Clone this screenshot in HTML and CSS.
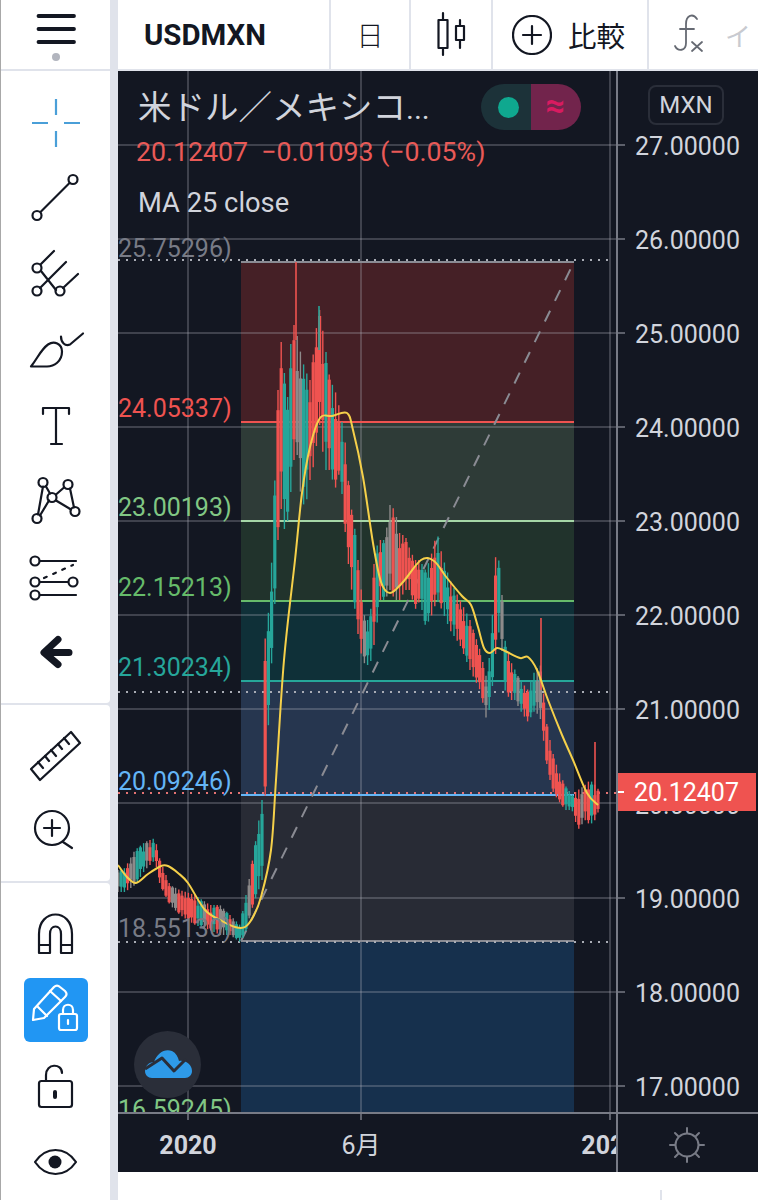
FILE: index.html
```html
<!DOCTYPE html>
<html lang="ja">
<head>
  <meta charset="UTF-8">
  <meta name="viewport" content="width=device-width, initial-scale=1">
  <title>USDMXN</title>
  <link rel="stylesheet" href="styles.css">
</head>
<body>
  <div class="app">
    <aside class="sidebar">
      <div class="menu">
        <svg class="icon" width="64" height="64" viewBox="23 3 64 64">
          <path class="thick" d="M37.500 16H73M37.500 29H73M37.500 42H73"/>
          <circle class="menu-dot" cx="55" cy="57" r="4"/>
        </svg>
      </div>

      <div class="group group-draw">
        <div class="tool">
          <svg class="icon crosshair" width="64" height="64" viewBox="24 91 64 64">
            <path d="M32 123H48M64 123H80M56 99V115M56 131V147"/>
          </svg>
        </div>
        <div class="tool">
          <svg class="icon" width="64" height="64" viewBox="24 166.500 64 64">
            <path d="M40.500 212.500L69.500 183.500"/>
            <circle cx="37" cy="216" r="4.500"/>
            <circle cx="73" cy="180" r="4.500"/>
          </svg>
        </div>
        <div class="tool">
          <svg class="icon" width="64" height="64" viewBox="24 242 64 64">
            <path d="M41 264L54 251M41 271L56 290M40 288L66 262M63 288L78 274"/>
            <circle cx="37" cy="268" r="4.500"/>
            <circle cx="37" cy="291" r="4.500"/>
            <circle cx="60" cy="291" r="4.500"/>
          </svg>
        </div>
        <div class="tool">
          <svg class="icon" width="64" height="64" viewBox="24 317.500 64 64">
            <path d="M31 367C38 358 41 350 48 345C54 341 62 344 62 352C62 362 54 367 47 367Z"/>
            <path d="M61 337C61 343 65 347 70 345L83 334"/>
          </svg>
        </div>
        <div class="tool">
          <svg class="icon" width="64" height="64" viewBox="24 393 64 64">
            <path d="M43 414V408H69V414M56 408V444M51 444H62"/>
          </svg>
        </div>
        <div class="tool">
          <svg class="icon" width="64" height="64" viewBox="24 468.500 64 64">
            <path d="M38 515L43 487M40 516L49 501M46 487L50 494M56 495L64 488M70 489L74 508M56 501L71 510"/>
            <circle cx="43" cy="483" r="4.500"/>
            <circle cx="68" cy="485" r="4.500"/>
            <circle cx="52" cy="498" r="4.500"/>
            <circle cx="37" cy="519" r="4.500"/>
            <circle cx="75" cy="512" r="4.500"/>
          </svg>
        </div>
        <div class="tool">
          <svg class="icon" width="64" height="64" viewBox="24 544 64 64">
            <path d="M40 561H76M40 582H68M40 595H76"/>
            <path class="dashed" d="M44 578L73 565"/>
            <circle cx="35" cy="561" r="4.500"/>
            <circle cx="35" cy="582" r="4.500"/>
            <circle cx="73" cy="582" r="4.500"/>
            <circle cx="35" cy="595" r="4.500"/>
          </svg>
        </div>
        <div class="tool">
          <svg class="icon" width="64" height="64" viewBox="24 619.500 64 64">
            <path class="arrow" d="M45 653H69M58 640L44 653L58 665"/>
          </svg>
        </div>
      </div>

      <div class="group group-measure">
        <div class="tool tool-short">
          <svg class="icon" width="64" height="64" viewBox="24 724 64 64">
            <path d="M31 769L71 732L80 743L40 780Z"/>
            <path d="M38 762L43 768M45 756L49 761M51 750L56 756M58 744L62 749M64 738L69 744"/>
          </svg>
        </div>
        <div class="tool tool-short">
          <svg class="icon" width="64" height="64" viewBox="24 796 64 64">
            <circle cx="52" cy="828" r="17"/>
            <path d="M52 820V836M44 828H60M63 842L72 848"/>
          </svg>
        </div>
      </div>

      <div class="group group-lock">
        <div class="tool tool-tall">
          <svg class="icon" width="64" height="64" viewBox="24 902 64 64">
            <path d="M39 953V934C39 908 72 908 72 934V953H61V934C61 924 50 924 50 934V953Z"/>
            <path d="M39 945H50M61 945H72"/>
          </svg>
        </div>
        <div class="tool tool-tall">
          <div class="active-tool">
            <svg class="icon icon-white" width="64" height="64" viewBox="0 0 64 64">
              <path d="M10 31L30 9C32 7 34 7 36 9L41 13C43 15 43 17 41 19L20 40L9 42Z"/>
              <path d="M26 13L37 23M14 29L23 38"/>
              <rect x="35" y="36" width="18" height="16" rx="2"/>
              <path d="M39 36V32C39 25 49 25 49 32V36"/>
              <path d="M44 42V46"/>
            </svg>
          </div>
        </div>
        <div class="tool tool-tall">
          <svg class="icon" width="64" height="64" viewBox="24 1054 64 64">
            <rect x="39" y="1081" width="33" height="26" rx="2.500"/>
            <path d="M46 1081V1075C46 1063 62 1063 62 1073"/>
            <path class="keyhole" d="M55 1092V1097"/>
          </svg>
        </div>
        <div class="tool tool-tall">
          <svg class="icon" width="64" height="64" viewBox="24 1130 64 64">
            <path d="M35 1162C46 1146 65 1146 76 1162C65 1178 46 1178 35 1162Z"/>
            <circle class="pupil" cx="55" cy="1162" r="6.500"/>
          </svg>
        </div>
      </div>
    </aside>

    <div class="gutter"></div>

    <main class="main">
      <header class="topbar">
        <div class="cell cell-symbol">USDMXN</div>
        <div class="cell cell-interval">日</div>
        <div class="cell cell-bars">
          <svg class="icon" width="40" height="50" viewBox="432 5 40 50">
            <rect x="438.500" y="15" width="9" height="28"/>
            <rect x="456" y="21" width="8" height="14"/>
            <path d="M443 8V15M443 43V50M460 15V21M460 35V43"/>
          </svg>
        </div>
        <div class="cell cell-compare">
          <svg class="icon" width="40" height="40" viewBox="512 10 40 40">
            <circle cx="532" cy="30" r="19"/>
            <path d="M532 21V39M523 30H541"/>
          </svg>
          <span>比較</span>
        </div>
        <div class="cell cell-more">
          <svg class="icon icon-grey" width="34" height="44" viewBox="671 8 34 44">
            <path d="M697 14C693 8 686 10 686 19V38C686 46 678 47 675 41M680 24H694"/>
            <path d="M692 37L702 46M702 37L692 46"/>
          </svg>
          <span class="cut-label">イ</span>
        </div>
      </header>

      <section class="chart">
        <svg class="plot" width="640" height="1101" viewBox="118 71 640 1101">
          <defs>
            <clipPath id="plotClip"><rect x="118" y="71" width="498" height="1042"/></clipPath>
            <clipPath id="timeClip"><rect x="118" y="1113" width="498" height="59"/></clipPath>
          </defs>

          <g clip-path="url(#plotClip)">
            <rect class="zone-red" x="241" y="262" width="333" height="160"/>
            <rect class="zone-sage" x="241" y="422" width="333" height="99"/>
            <rect class="zone-green" x="241" y="521" width="333" height="80"/>
            <rect class="zone-teal" x="241" y="601" width="333" height="80"/>
            <rect class="zone-blue" x="241" y="681" width="333" height="114"/>
            <rect class="zone-grey" x="241" y="795" width="333" height="146"/>
            <rect class="zone-navy" x="241" y="941" width="333" height="172"/>

            <g class="grid">
              <path d="M188 71V1113M361 71V1113M610 71V1113"/>
              <path d="M118 145H616M118 239H616M118 333H616M118 427H616M118 521H616M118 615H616M118 709H616M118 803H616M118 898H616M118 992H616M118 1086H616"/>
            </g>

            <path class="level level-top" d="M241 262H574"/>
            <path class="level level-red" d="M241 422H574"/>
            <path class="level level-sage" d="M241 521H574"/>
            <path class="level level-green" d="M241 601H574"/>
            <path class="level level-teal" d="M241 681H574"/>
            <path class="level level-blue" d="M241 795H574"/>
            <path class="level level-top" d="M241 941H574"/>

            <path class="dots" d="M118 260H612M118 692H612M118 942H612"/>
            <path class="dots dots-red" d="M118 793H616"/>
            <path class="trend" d="M241 941L574 262"/>

            <g id="candles"></g>
            <path id="maLine" class="ma"/>

            <text class="fib fib-grey" x="118" y="257">25.75296)</text>
            <text class="fib fib-red" x="118" y="417">24.05337)</text>
            <text class="fib fib-sage" x="118" y="516">23.00193)</text>
            <text class="fib fib-green" x="118" y="596">22.15213)</text>
            <text class="fib fib-teal" x="118" y="676">21.30234)</text>
            <text class="fib fib-blue" x="118" y="790">20.09246)</text>
            <text class="fib fib-grey" x="118" y="937">18.55130)</text>
            <text class="fib fib-sage" x="118" y="1118">16.59245)</text>
          </g>

          <path class="axis-tick" d="M616 145H625M616 239H625M616 333H625M616 427H625M616 521H625M616 615H625M616 709H625M616 898H625M616 992H625M616 1086H625"/>
          <path class="axis-tick" d="M188 1113V1120M361 1113V1120M610 1113V1120"/>

          <text class="price" x="635" y="155">27.00000</text>
          <text class="price" x="635" y="249">26.00000</text>
          <text class="price" x="635" y="343">25.00000</text>
          <text class="price" x="635" y="437">24.00000</text>
          <text class="price" x="635" y="531">23.00000</text>
          <text class="price" x="635" y="625">22.00000</text>
          <text class="price" x="635" y="719">21.00000</text>
          <text class="price" x="635" y="814">20.00000</text>
          <text class="price" x="635" y="908">19.00000</text>
          <text class="price" x="635" y="1002">18.00000</text>
          <text class="price" x="635" y="1096">17.00000</text>

          <rect class="last-bg" x="616" y="773" width="140" height="38"/>
          <path class="last-tick" d="M618 792H624"/>
          <text class="price price-last" x="634" y="801">20.12407</text>

          <g clip-path="url(#timeClip)">
            <text class="time" x="188" y="1154">2020</text>
            <text class="time time-thin" x="361" y="1154">6月</text>
            <text class="time" x="610" y="1154">2021</text>
          </g>

          <path class="axis" d="M118 1113H758M617 71V1172"/>

          <g class="sun">
            <circle cx="687" cy="1145" r="11.500"/>
            <path d="M687 1128V1133M687 1157V1162M670 1145H675M699 1145H704M675 1133L678 1136M696 1154L699 1157M699 1133L696 1136M678 1154L675 1157"/>
          </g>
        </svg>

        <div class="legend">
          <div class="legend-title">米ドル／メキシコ<span class="legend-dots">...</span></div>
          <div class="legend-quote">20.12407&nbsp; −0.01093 (−0.05%)</div>
          <div class="legend-ma">MA 25 close</div>
        </div>

        <div class="status-pill">
          <div class="pill-left"><span class="pill-dot"></span></div>
          <div class="pill-right">≈</div>
        </div>

        <div class="currency">MXN</div>

        <div class="watermark">
          <svg width="50" height="36" viewBox="0 0 50 36">
            <path class="cloud" d="M2 24C2 19 6 15 11 15C14 6 22 1 29 4C33 6 35 10 36 14C43 13 49 18 49 24C49 28 46 31 42 31H9C5 31 2 28 2 24Z"/>
            <path class="cloud-line" d="M2 22L19 11L31 24L43 12"/>
          </svg>
        </div>
      </section>

      <footer class="footer"><span class="footer-sep"></span></footer>
    </main>
  </div>

  <script src="chart.js"></script>
</body>
</html>
```

FILE: styles.css
```css
* {
  box-sizing: border-box;
  margin: 0;
  padding: 0;
}

body {
  background: #ffffff;
  font-family: Roboto, "Noto Sans CJK JP", sans-serif;
  color: #131722;
  overflow: hidden;
}

.app {
  display: flex;
  width: 758px;
  height: 1200px;
  border-left: 1px solid #a8a8a8;
}

/* left tool column */
.sidebar {
  display: flex;
  flex-direction: column;
  gap: 2px;
  width: 109px;
  flex-shrink: 0;
  background: #e0e3eb;
}

.menu {
  display: flex;
  align-items: center;
  justify-content: center;
  height: 69px;
  background: #ffffff;
}

.group {
  background: #ffffff;
}

.group-draw {
  height: 632px;
  padding-top: 14px;
  border-radius: 0 0 4px 0;
}

.group-measure {
  height: 176px;
  padding-top: 15px;
  border-radius: 0 4px 4px 0;
}

.group-lock {
  flex: 1;
  padding-top: 13px;
  border-radius: 0 4px 0 0;
}

.tool {
  display: flex;
  align-items: center;
  justify-content: center;
  height: 75.500px;
}

.tool-short {
  height: 72px;
}

.tool-tall {
  height: 76px;
}

.active-tool {
  display: flex;
  align-items: center;
  justify-content: center;
  width: 64px;
  height: 64px;
  background: #2196f3;
  border-radius: 6px;
}

.icon {
  display: block;
  fill: none;
  stroke: #131722;
  stroke-width: 2.200;
  stroke-linecap: round;
  stroke-linejoin: round;
}

.icon .thick {
  stroke-width: 3.800;
}

.icon .menu-dot {
  fill: #b2b5be;
  stroke: none;
}

.icon .dashed {
  stroke-dasharray: 3 7;
}

.icon .arrow {
  stroke-width: 7;
}

.icon .keyhole {
  stroke-width: 4;
}

.icon .pupil {
  fill: #131722;
  stroke: none;
}

.crosshair {
  stroke: #4a9fd8;
  stroke-linecap: butt;
}

.icon-white {
  stroke: #ffffff;
}

.icon-grey {
  stroke: #666a73;
  stroke-width: 1.800;
}

.gutter {
  width: 8px;
  flex-shrink: 0;
  background: #e0e3eb;
}

.main {
  display: flex;
  flex-direction: column;
  width: 640px;
}

/* top bar */
.topbar {
  display: flex;
  height: 71px;
  border-bottom: 2px solid #e0e3eb;
  overflow: hidden;
}

.cell {
  display: flex;
  align-items: center;
  justify-content: center;
  border-right: 2px solid #e0e3eb;
}

.cell-symbol {
  justify-content: flex-start;
  width: 213px;
  padding-left: 26px;
  font-size: 29.400px;
  font-weight: 700;
}

.cell-interval {
  width: 80px;
  font-family: "Noto Sans CJK JP", sans-serif;
  font-size: 27px;
  font-weight: 300;
}

.cell-bars {
  width: 82px;
  padding-left: 2px;
}

.cell-compare {
  justify-content: flex-start;
  gap: 16px;
  width: 156px;
  padding-left: 19px;
  font-family: "Noto Sans CJK JP", sans-serif;
  font-size: 28.500px;
  font-weight: 400;
}

.cell-more {
  flex: 1;
  justify-content: flex-start;
  gap: 20px;
  padding-left: 22px;
  border-right: none;
}

.cut-label {
  font-family: "Noto Sans CJK JP", sans-serif;
  font-size: 26px;
  color: #c8cad0;
}

/* chart */
.chart {
  position: relative;
  height: 1101px;
  background: #131722;
  overflow: hidden;
}

.plot {
  display: block;
  font-family: Roboto, sans-serif;
}

.zone-red { fill: #452026; }
.zone-sage { fill: #2e3b37; }
.zone-green { fill: #21332c; }
.zone-teal { fill: #0f3038; }
.zone-blue { fill: #26364f; }
.zone-grey { fill: #282b35; }
.zone-navy { fill: #16304d; }

.grid path {
  fill: none;
  stroke: rgba(178, 181, 190, 0.28);
  stroke-width: 2;
}

.level {
  fill: none;
  stroke-width: 2;
}

.level-top { stroke: #8a8b93; }
.level-red { stroke: #ef5350; }
.level-sage { stroke: #a5d6a7; }
.level-green { stroke: #66bb6a; }
.level-teal { stroke: #26a69a; }
.level-blue { stroke: #64b5f6; }

.dots {
  fill: none;
  stroke: #a9acb5;
  stroke-width: 2;
  stroke-dasharray: 2 6;
}

.dots-red {
  stroke: #e57373;
}

.trend {
  fill: none;
  stroke: #8a8b93;
  stroke-width: 2;
  stroke-dasharray: 12 11;
}

.ma {
  fill: none;
  stroke: #f5d04a;
  stroke-width: 2;
  stroke-linejoin: round;
}

.fib {
  font-size: 25px;
}

.fib-grey { fill: #787b86; }
.fib-red { fill: #ef5350; }
.fib-sage { fill: #81c784; }
.fib-green { fill: #66bb6a; }
.fib-teal { fill: #26a69a; }
.fib-blue { fill: #64b5f6; }

.axis {
  fill: none;
  stroke: #787b86;
  stroke-width: 2;
}

.axis-tick {
  fill: none;
  stroke: #5d606b;
  stroke-width: 2;
}

.price {
  fill: #d1d4dc;
  font-size: 25px;
}

.price-last {
  fill: #ffffff;
}

.last-bg {
  fill: #ef5350;
}

.last-tick {
  stroke: #ffffff;
  stroke-width: 2;
}

.time {
  fill: #d1d4dc;
  font-size: 25px;
  font-weight: 700;
  text-anchor: middle;
}

.time-thin {
  font-family: Roboto, "Noto Sans CJK JP", sans-serif;
  font-weight: 400;
}

.sun {
  fill: none;
  stroke: #787b86;
  stroke-width: 2;
  stroke-linecap: round;
}

/* things that lie over the chart */
.legend {
  position: absolute;
  top: 9px;
  left: 20px;
  color: #d1d4dc;
}

.legend-title {
  font-family: "Noto Sans CJK JP", sans-serif;
  font-size: 33.500px;
  font-weight: 400;
  line-height: 50px;
  white-space: nowrap;
}

.legend-dots {
  font-family: Roboto, sans-serif;
  font-size: 30px;
}

.legend-quote {
  margin-left: -2px;
  font-size: 26.700px;
  line-height: 36px;
  color: #e95a57;
  white-space: nowrap;
}

.legend-ma {
  margin-top: 15px;
  font-size: 27.300px;
  line-height: 36px;
}

.status-pill {
  position: absolute;
  top: 13px;
  left: 363px;
  display: flex;
  width: 100px;
  height: 46px;
  border-radius: 23px;
  overflow: hidden;
}

.pill-left {
  display: flex;
  align-items: center;
  justify-content: center;
  width: 50px;
  padding-left: 4px;
  background: #1c3239;
}

.pill-dot {
  width: 21px;
  height: 21px;
  background: #0fa88f;
  border-radius: 50%;
}

.pill-right {
  width: 50px;
  padding-right: 2px;
  background: #72244c;
  font-size: 34px;
  font-weight: 700;
  line-height: 42px;
  text-align: center;
  color: #d81b60;
}

.currency {
  position: absolute;
  top: 14px;
  left: 530px;
  width: 76px;
  height: 40px;
  border: 2px solid #2a2e39;
  border-radius: 8px;
  font-size: 24px;
  line-height: 36px;
  text-align: center;
  color: #d1d4dc;
}

.watermark {
  position: absolute;
  top: 960px;
  left: 16px;
  display: flex;
  align-items: center;
  justify-content: center;
  width: 67px;
  height: 67px;
  background: #2a2e39;
  border-radius: 50%;
}

.cloud {
  fill: #2e9ae8;
}

.cloud-line {
  fill: none;
  stroke: #2a2e39;
  stroke-width: 3;
  stroke-linejoin: round;
}

.footer {
  flex: 1;
  padding: 18px 0 0 542px;
  background: #ffffff;
}

.footer-sep {
  display: block;
  width: 2px;
  height: 10px;
  background: #e0e3eb;
}
```

FILE: chart.js
```js
// envelope of the price series: [x, top of range, bottom of range]
const envelope = [
  [118, 870, 892], [125, 868, 892], [135, 850, 885], [145, 842, 870], [155, 838, 860],
  [160, 860, 885], [170, 885, 905], [180, 890, 915], [195, 895, 925], [210, 905, 930],
  [220, 905, 935], [230, 915, 935], [240, 925, 942], [245, 900, 935], [250, 875, 915],
  [255, 845, 900], [262, 800, 880], [265, 640, 800], [270, 600, 690], [273, 530, 640],
  [277, 420, 560], [280, 330, 500], [284, 370, 530], [288, 400, 520], [292, 320, 480],
  [296, 330, 440], [300, 350, 490], [305, 370, 510], [310, 380, 480], [315, 340, 460],
  [319, 306, 420], [325, 345, 470], [330, 380, 470], [335, 390, 490], [340, 410, 470],
  [345, 440, 530], [350, 500, 580], [355, 530, 610], [360, 580, 650], [365, 620, 665],
  [370, 620, 665], [375, 550, 640], [380, 540, 600], [385, 540, 600], [390, 505, 590],
  [395, 510, 600], [400, 535, 600], [405, 535, 590], [410, 550, 590], [415, 560, 610],
  [420, 560, 600], [425, 570, 625], [430, 560, 620], [437, 532, 600], [442, 555, 610],
  [450, 580, 630], [460, 600, 645], [470, 620, 670], [480, 650, 690], [487, 680, 722],
  [491, 640, 700], [496, 550, 650], [500, 565, 625], [505, 640, 690], [510, 660, 700],
  [515, 670, 700], [520, 680, 710], [528, 690, 722], [535, 670, 710], [541, 665, 720],
  [546, 720, 760], [552, 750, 790], [558, 770, 800], [565, 785, 810], [572, 795, 810],
  [578, 790, 830], [585, 785, 820], [590, 780, 825], [595, 785, 820], [599, 790, 810]
];

// long single wicks that stick out of the envelope
const spikes = [
  [296, 262, 340, '#ef5350'],
  [541, 618, 690, '#ef5350'],
  [595, 742, 800, '#ef5350'],
  [319, 306, 350, '#26a69a']
];

// 25 period average, page coordinates
const maPoints = [
  [118, 865], [127, 877], [136, 883], [148, 874], [161, 866], [168, 866], [178, 873],
  [188, 883], [205, 910], [222, 921], [235, 927], [245, 927], [253, 917], [261, 897],
  [271, 850], [276, 780], [284, 660], [295, 560], [302, 493], [310, 447], [320, 418],
  [332, 416], [347, 413], [353, 430], [363, 477], [373, 543], [381, 582], [390, 593],
  [403, 582], [421, 560], [434, 561], [447, 578], [462, 596], [471, 605], [478, 627],
  [484, 648], [490, 653], [497, 648], [505, 651], [520, 658], [528, 657], [537, 670],
  [548, 700], [562, 735], [573, 760], [587, 793], [598, 805]
];

const SVG_NS = 'http://www.w3.org/2000/svg';
const candles = document.getElementById('candles');
const RED = '#ef5350';
const TEAL = '#26a69a';
const GREY = '#8d8a8a';

// small fixed random sequence, so the picture is the same on each load
let seed = 17;
function rand() {
  seed = (seed * 16807) % 2147483647;
  return seed / 2147483647;
}

function rangeAt(x) {
  for (let i = 0; i < envelope.length - 1; i++) {
    const a = envelope[i];
    const b = envelope[i + 1];
    if (x >= a[0] && x <= b[0]) {
      const t = (x - a[0]) / (b[0] - a[0]);
      return [a[1] + (b[1] - a[1]) * t, a[2] + (b[2] - a[2]) * t];
    }
  }
  return null;
}

function addLine(x, y1, y2, width, colour) {
  const line = document.createElementNS(SVG_NS, 'line');
  line.setAttribute('x1', x);
  line.setAttribute('x2', x);
  line.setAttribute('y1', y1);
  line.setAttribute('y2', y2);
  line.setAttribute('stroke', colour);
  line.setAttribute('stroke-width', width);
  candles.appendChild(line);
}

// rising stretches lean teal, falling ones lean red
function pickColour(x, range) {
  const next = rangeAt(x + 6) || range;
  const rising = next[0] + next[1] < range[0] + range[1];
  const r = rand();
  if (r < 0.15) return GREY;
  if (rising) return r < 0.8 ? TEAL : RED;
  return r < 0.8 ? RED : TEAL;
}

for (let x = 118; x < 600; x += 3.2) {
  const range = rangeAt(x);
  if (!range) continue;
  const height = range[1] - range[0];
  const colour = pickColour(x, range);
  const bodyTop = range[0] + height * (0.05 + rand() * 0.25);
  const bodyBottom = range[1] - height * (0.05 + rand() * 0.25);
  addLine(x, range[0], range[1], 1.4, colour);
  addLine(x, bodyTop, bodyBottom, 3.2, colour);
}

spikes.forEach(s => addLine(s[0], s[1], s[2], 1.6, s[3]));

// smooth the average with a catmull-rom curve
let d = `M${maPoints[0][0]} ${maPoints[0][1]}`;
for (let i = 0; i < maPoints.length - 1; i++) {
  const p0 = maPoints[Math.max(i - 1, 0)];
  const p1 = maPoints[i];
  const p2 = maPoints[i + 1];
  const p3 = maPoints[Math.min(i + 2, maPoints.length - 1)];
  const c1x = p1[0] + (p2[0] - p0[0]) / 6;
  const c1y = p1[1] + (p2[1] - p0[1]) / 6;
  const c2x = p2[0] - (p3[0] - p1[0]) / 6;
  const c2y = p2[1] - (p3[1] - p1[1]) / 6;
  d += `C${c1x} ${c1y} ${c2x} ${c2y} ${p2[0]} ${p2[1]}`;
}
document.getElementById('maLine').setAttribute('d', d);
```
